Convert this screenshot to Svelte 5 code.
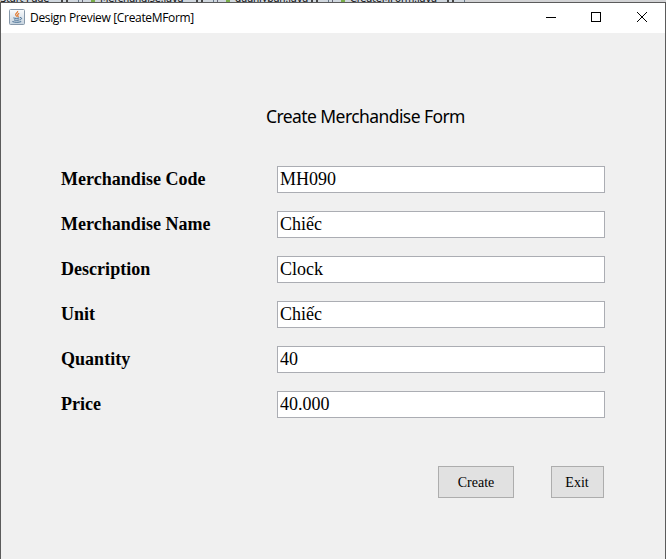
<script>
  const fields = $state([
    { label: 'Merchandise Code', value: 'MH090' },
    { label: 'Merchandise Name', value: 'Chiếc' },
    { label: 'Description', value: 'Clock' },
    { label: 'Unit', value: 'Chiếc' },
    { label: 'Quantity', value: '40' },
    { label: 'Price', value: '40.000' }
  ]);
  const tabs = [
    { name: 'Start Page', width: 79, first: true },
    { name: 'Merchandise.java', width: 135 },
    { name: 'quanlyban.java', width: 115 },
    { name: 'CreateMForm.java', width: 136 }
  ];
</script>

<div class="screen">
  <div class="tabs">
    {#each tabs as tab}
      <div class="tab" class:first={tab.first} style:width="{tab.width}px">
        {#if !tab.first}<i class="file"></i>{/if}
        <span class="name">{tab.name}</span>
        <i class="close"></i>
      </div>
    {/each}
  </div>
  <div class="window">
    <header>
      <svg class="java" width="16" height="16" viewBox="0 0 16 16">
        <defs>
          <linearGradient id="tile" x1="0" y1="0" x2="0" y2="1">
            <stop offset="0" stop-color="#fbfcfd" />
            <stop offset="1" stop-color="#c6d3df" />
          </linearGradient>
        </defs>
        <rect x=".5" y=".5" width="15" height="15" rx="1" fill="url(#tile)" stroke="#8798aa" />
        <path d="M8.6 2c.8 1.7-2.8 2.4-1.9 4 .3.6 1 .9 1.1 1.7M10.2 4.4C8.5 5.2 8.2 6 9 7c.4.5.2 1-.2 1.3" fill="none" stroke="#e2792f" stroke-width="1.2" />
        <path d="M4.4 8.9c1.8.6 4.2.6 6 0M5 10.9c1.600.5 3.600.5 5.200 0M11 8.600c2.400-.3 2 2-.4 2.300M3.400 12.600c2.700.9 6.200.9 8.800 0" fill="none" stroke="#426b91" />
      </svg>
      <span class="caption">Design Preview [CreateMForm]</span>
      <svg class="controls" width="104" height="12" viewBox="0 0 104 12" fill="none" stroke="#000" shape-rendering="crispEdges">
        <path d="M0 5.500h10M45.500.5h9v9h-9z" />
        <path d="M91 0l10 10M101 0l-10 10" shape-rendering="auto" />
      </svg>
    </header>
    <main>
      <h1>Create Merchandise Form</h1>
      <form>
        {#each fields as field, i}
          <div class="row">
            <label for="field-{i}">{field.label}</label>
            <input id="field-{i}" type="text" bind:value={field.value} spellcheck="false" />
          </div>
        {/each}
        <div class="actions">
          <button type="button" class="create">Create</button>
          <button type="button" class="exit">Exit</button>
        </div>
      </form>
    </main>
  </div>
</div>

<style>
  .screen {
    box-sizing: border-box;
    width: 666px;
    height: 559px;
    overflow: hidden;
    display: flex;
    flex-direction: column;
    background: #f0f0f0;
  }
  .tabs {
    height: 2px;
    flex: none;
    display: flex;
    align-items: flex-end;
    overflow: hidden;
    background: #d2d3d5;
    font: 11px/14px "DejaVu Sans Condensed", sans-serif;
  }
  .tab {
    box-sizing: border-box;
    height: 14px;
    margin-bottom: -4px;
    display: flex;
    align-items: center;
    border-right: 1px solid #66788a;
    background: #d0d7de;
    padding: 0 10px 0 3px;
    color: #111;
    white-space: nowrap;
    letter-spacing: -0.2px;
  }
  .tab.first { padding-left: 0; }
  .name { flex: 1; }
  .file {
    box-sizing: border-box;
    width: 13px;
    height: 11px;
    margin-right: 5px;
    border: 1px solid #667;
    border-right: 4px solid #79ad49;
  }
  .close {
    width: 3px;
    height: 12px;
    border: solid #444;
    border-width: 0 2px;
  }
  .window {
    box-sizing: border-box;
    flex: 1;
    display: flex;
    flex-direction: column;
    border: 1px solid #5b5b5b;
    border-bottom: 0;
  }
  header {
    height: 30px;
    flex: none;
    box-sizing: border-box;
    display: flex;
    align-items: flex-start;
    padding: 6px 15px 0 8px;
    background: #fff;
  }
  .caption {
    margin-left: 5px;
    flex: 1;
    font: 12px/17px "Open Sans", sans-serif;
    letter-spacing: -0.33px;
    color: #000;
    white-space: nowrap;
  }
  .controls { margin-top: 3px; }
  main {
    flex: 1;
    background: #f0f0f0;
    padding: 71px 60px 0;
  }
  h1 {
    margin: 0 0 0 205px;
    font: 17.5px/24px "Noto Sans", sans-serif;
    letter-spacing: -0.58px;
    color: #000;
    white-space: nowrap;
  }
  form {
    margin-top: 38px;
    font-family: "Liberation Serif", serif;
    color: #000;
  }
  .row {
    display: flex;
    align-items: center;
    height: 27px;
    margin-bottom: 18px;
  }
  label {
    width: 216px;
    font-size: 18px;
    font-weight: bold;
    letter-spacing: 0.03px;
  }
  input {
    box-sizing: border-box;
    width: 328px;
    height: 27px;
    margin: 0;
    padding: 0 2px;
    border: 1px solid #abadb3;
    border-radius: 0;
    background: #fff;
    color: #000;
    font: 18px/24px "Liberation Serif", serif;
    outline: none;
  }
  .actions {
    display: flex;
    gap: 37px;
    margin: 48px 0 0 377px;
  }
  button {
    box-sizing: border-box;
    height: 32px;
    padding: 1px 0 0;
    border: 1px solid #adadad;
    border-radius: 0;
    background: #e1e1e1;
    color: #000;
    font: 14px/29px "Liberation Serif", serif;
  }
  .create { width: 76px; }
  .exit { width: 53px; padding-right: 1px; }
</style>
